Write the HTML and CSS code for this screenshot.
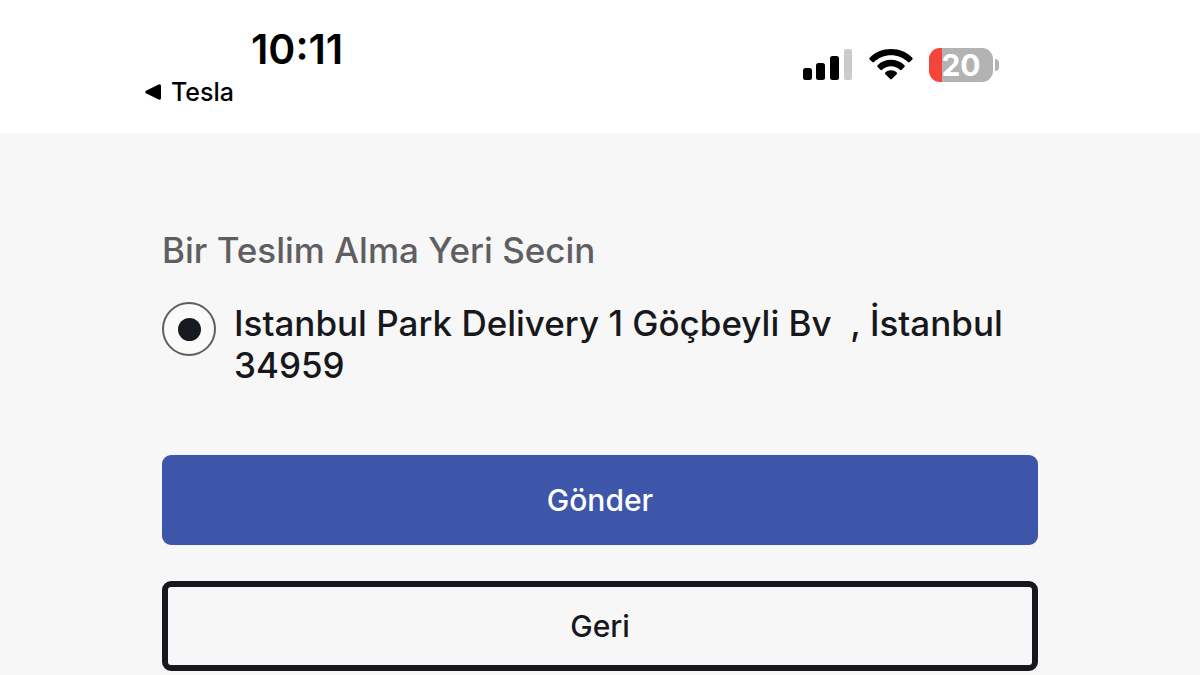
FILE: index.html
```html
<!DOCTYPE html>
<html lang="tr">
<head>
<meta charset="utf-8">
<meta name="viewport" content="width=device-width, initial-scale=1">
<title>Teslim Alma Yeri</title>
<link rel="stylesheet" href="styles.css">
</head>
<body>
<header class="status-bar">
  <div class="status-left">
    <time class="clock">10:11</time>
    <a class="back-link" href="#">
      <svg class="back-icon" viewBox="0 0 16 16" aria-hidden="true"><path d="M13.600.500Q16-.4 16 2v12q0 2.400-2.400 1.500L1 9.300Q-.7 8 1 6.700z"/></svg>
      <span>Tesla</span>
    </a>
  </div>
  <div class="status-icons">
    <svg class="signal" viewBox="0 0 50 32" role="img" aria-label="Sinyal">
      <rect x="0" y="19" width="9" height="12" rx="2.500"/>
      <rect x="13" y="14" width="9" height="17" rx="2.500"/>
      <rect x="27" y="7" width="9" height="24" rx="2.500"/>
      <rect class="signal-off" x="41" y="0" width="8" height="31" rx="2.500"/>
    </svg>
    <svg class="wifi" viewBox="0 0 44 32" role="img" aria-label="Wi-Fi">
      <path d="M22 0C13.500 0 6 3.300.700 8.700q-.9.900 0 1.800l2.600 2.600q.8.800 1.700 0C9.500 8.800 15.500 6.300 22 6.300s12.500 2.500 17 6.800q.9.800 1.700 0l2.600-2.600q.9-.9 0-1.800C38 3.300 30.500 0 22 0z"/>
      <path d="M22 10.800c-5.200 0-9.900 2-13.400 5.400q-.9.900 0 1.800l2.800 2.800q.8.800 1.700 0c2.400-2.200 5.500-3.600 8.900-3.600s6.500 1.400 8.900 3.600q.9.800 1.700 0l2.800-2.800q.9-.9 0-1.800C31.900 12.800 27.200 10.800 22 10.800z"/>
      <path d="M22 21.300c-2.200 0-4.200.8-5.700 2.200q-.9.800 0 1.700l4.900 4.900q.8.800 1.600 0l4.900-4.900q.9-.9 0-1.700c-1.500-1.400-3.500-2.200-5.700-2.200z"/>
    </svg>
    <div class="battery">
      <span class="battery-body">20</span>
      <span class="battery-cap"></span>
    </div>
  </div>
</header>
<main class="page">
  <form class="pickup-form">
    <fieldset class="locations">
      <legend class="form-title">Bir Teslim Alma Yeri Secin</legend>
      <div class="option">
        <input class="option-radio" type="radio" name="location" id="istanbul-park" checked>
        <label class="option-label" for="istanbul-park">Istanbul Park Delivery 1 Göçbeyli Bv  , İstanbul 34959</label>
      </div>
    </fieldset>
    <div class="actions">
      <button class="button button-primary" type="submit">Gönder</button>
      <button class="button button-outline" type="button">Geri</button>
    </div>
  </form>
</main>
</body>
</html>
```
FILE: styles.css
```css
* {
  box-sizing: border-box;
}

body {
  margin: 0;
  min-height: 100vh;
  background: #f7f7f7;
  color: #17181c;
  font-family: Inter, "Liberation Sans", sans-serif;
}

.status-bar {
  display: flex;
  justify-content: space-between;
  align-items: flex-start;
  padding: 24px 201px 23px 145px;
  background: #fff;
  color: #000;
}

.status-left {
  display: flex;
  flex-direction: column;
}

.clock {
  padding-left: 106px;
  font-size: 41px;
  font-weight: 600;
  line-height: 50px;
}

.back-link {
  display: flex;
  align-items: center;
  gap: 10px;
  color: inherit;
  font-size: 25px;
  font-weight: 500;
  line-height: 36px;
  text-decoration: none;
}

.back-icon {
  width: 16px;
  height: 16px;
}

.status-icons {
  display: flex;
  align-items: center;
  gap: 16px;
  padding-top: 24px;
}

.signal {
  width: 50px;
  height: 32px;
}

.signal-off {
  fill: #cbcbcb;
}

.wifi {
  width: 44px;
  height: 32px;
}

.battery {
  display: flex;
  align-items: center;
  gap: 2px;
}

.battery-body {
  width: 64px;
  height: 34px;
  border-radius: 11px;
  background: linear-gradient(to right, #f5453a 20%, #b3b3b3 20%);
  color: #fff;
  font-size: 30px;
  font-weight: 700;
  line-height: 34px;
  text-align: center;
}

.battery-cap {
  width: 4px;
  height: 12px;
  border-radius: 0 6px 6px 0;
  background: #b3b3b3;
}

.page {
  padding: 96px 162px 4px;
}

.locations {
  min-width: 0;
  margin: 0;
  padding: 0;
  border: 0;
}

.form-title {
  padding: 0;
  color: #5f5f61;
  font-size: 35px;
  font-weight: 500;
  line-height: 42px;
}

.option {
  display: flex;
  align-items: flex-start;
  gap: 18px;
  padding-top: 31px;
}

.option-radio {
  display: grid;
  place-items: center;
  flex: none;
  width: 54px;
  height: 54px;
  margin: 0;
  border: 2px solid #5c5e62;
  border-radius: 50%;
  background: #fafafa;
  appearance: none;
}

.option-radio::before {
  width: 23px;
  height: 23px;
  border-radius: 50%;
  content: "";
}

.option-radio:checked::before {
  background: #171a20;
}

.option-label {
  font-size: 35px;
  font-weight: 500;
  line-height: 42px;
  white-space: pre-wrap;
}

.actions {
  display: flex;
  flex-direction: column;
  gap: 36px;
  padding-top: 69px;
}

.button {
  width: 100%;
  height: 90px;
  border: 6px solid #17181c;
  border-radius: 9px;
  background: transparent;
  color: #17181c;
  font-family: inherit;
  font-size: 30px;
  font-weight: 500;
}

.button-primary {
  border-color: #3d56aa;
  background: #3d56aa;
  color: #fff;
}
```
